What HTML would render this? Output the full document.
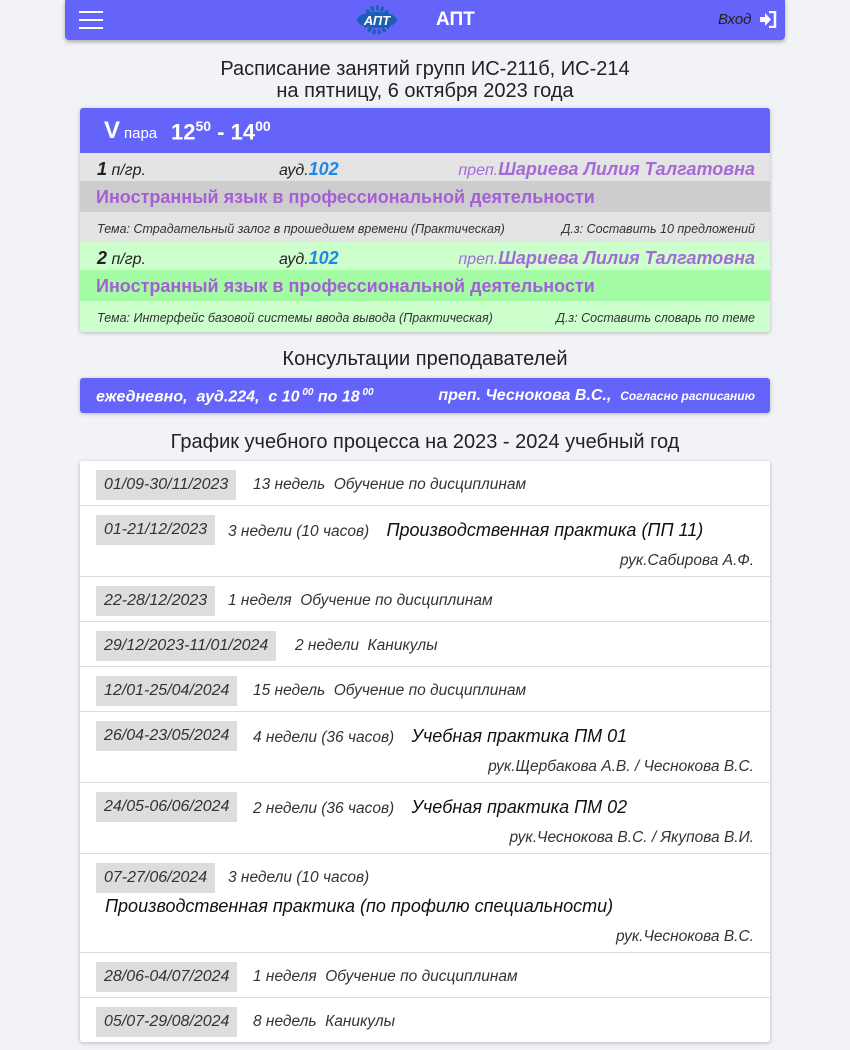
<!DOCTYPE html>
<html><head><meta charset="utf-8"><style>
*{box-sizing:border-box;margin:0;padding:0}
body{width:850px;height:1050px;overflow:hidden;background:#f2f3f6;font-family:"Liberation Sans",sans-serif;color:#222;position:relative}
.abs{position:absolute}
.nav{left:65px;top:0;width:720px;height:40px;background:#6464fa;border-radius:0 0 4px 4px;box-shadow:0 2px 4px rgba(0,0,0,.3)}
.burger span{position:absolute;left:14px;width:24px;height:2px;background:#fff}
.title{left:0;width:850px;text-align:center;font-size:20px;line-height:22px;color:#222}
.card{left:80px;width:690px;box-shadow:0 1px 4px rgba(0,0,0,.25);border-radius:3px;overflow:hidden}
.i{font-style:italic}
.row{position:absolute;left:0;width:690px;border-top:1px solid #ddd}
.d{position:absolute;left:16px;background:#ddd;height:30px;line-height:30px;padding:0 8px;font-style:italic;font-size:16px;color:#333}
.t{position:absolute;font-style:italic;font-size:15.5px;color:#333;line-height:30px;white-space:nowrap}
.b{font-size:18px;color:#111}
.r{position:absolute;right:16px;font-style:italic;font-size:15.5px;color:#333;white-space:nowrap}
</style></head><body>
<div class="abs nav">
 <div class="burger"><span style="top:11px"></span><span style="top:19px"></span><span style="top:27px"></span></div>
 <svg class="abs" style="left:290px;top:5px" width="44" height="30" viewBox="0 0 44 30"><circle cx="22" cy="15" r="12" fill="none" stroke="#1a5fb4" stroke-width="5" stroke-dasharray="3 2"/><ellipse cx="22" cy="15" rx="20" ry="8" fill="#1a5fb4"/><text x="22" y="20" text-anchor="middle" font-size="13" font-style="italic" font-weight="bold" fill="#fff" font-family="Liberation Sans">АПТ</text></svg>
 <div class="abs" style="left:371px;top:9px;color:#fff;font-weight:bold;font-size:19px">АПТ</div>
 <div class="abs i" style="left:653px;top:11px;font-size:15px;color:#222">Вход</div>
 <svg class="abs" style="left:694px;top:11px" width="18" height="17" viewBox="0 0 18 17"><path d="M10 1h6v15h-6" fill="none" stroke="#fff" stroke-width="2.5"/><path d="M1 6h5V2l6 6.5-6 6.5v-4H1z" fill="#fff"/></svg>
</div>
<div class="abs title" style="top:58px">Расписание занятий групп ИС-211б, ИС-214<br>на пятницу, 6 октября 2023 года</div>
<div class="abs card" style="top:108px;height:224px">
 <div class="abs" style="left:0;top:0;width:690px;height:45px;background:#6464fa;color:#fff">
  <span class="abs" style="left:24px;top:9px;font-size:24px;font-weight:bold">V</span>
  <span class="abs" style="left:44px;top:17px;font-size:15px">пара</span>
  <span class="abs" style="left:91px;top:10px;font-size:22px;font-weight:bold">12<sup style="font-size:14px">50</sup> - 14<sup style="font-size:14px">00</sup></span>
 </div>
 <div class="abs" style="top:45px;left:0;width:690px;height:28px;background:#e4e4e4"></div>
 <div class="abs" style="top:73px;left:0;width:690px;height:31px;background:#cdcdcd"></div>
 <div class="abs" style="top:104px;left:0;width:690px;height:30px;background:#e4e4e4"></div>
 <div class="abs" style="top:134px;left:0;width:690px;height:28px;background:#ccffcc"></div>
 <div class="abs" style="top:162px;left:0;width:690px;height:31px;background:#a3fba3"></div>
 <div class="abs" style="top:193px;left:0;width:690px;height:31px;background:#ccffcc"></div>
 <div class="abs i" style="left:17px;top:51px;font-size:16px"><b style="font-size:18px">1</b> п/гр.</div>
 <div class="abs i" style="left:199px;top:51px;font-size:16px">ауд.<b style="color:#1e88e5;font-size:18px">102</b></div>
 <div class="abs i" style="right:15px;top:51px;font-size:16px;color:#a66ad8">преп.<b style="font-size:18px">Шариева Лилия Талгатовна</b></div>
 <div class="abs" style="left:16px;top:79px;font-size:18px;font-weight:bold;color:#a55fd6">Иностранный язык в профессиональной деятельности</div>
 <div class="abs i" style="left:17px;top:114px;font-size:12.5px;color:#333">Тема: Страдательный залог в прошедшем времени (Практическая)</div>
 <div class="abs i" style="right:15px;top:114px;font-size:12.5px;color:#333">Д.з: Составить 10 предложений</div>
 <div class="abs i" style="left:17px;top:140px;font-size:16px"><b style="font-size:18px">2</b> п/гр.</div>
 <div class="abs i" style="left:199px;top:140px;font-size:16px">ауд.<b style="color:#1e88e5;font-size:18px">102</b></div>
 <div class="abs i" style="right:15px;top:140px;font-size:16px;color:#a66ad8">преп.<b style="font-size:18px">Шариева Лилия Талгатовна</b></div>
 <div class="abs" style="left:16px;top:168px;font-size:18px;font-weight:bold;color:#a55fd6">Иностранный язык в профессиональной деятельности</div>
 <div class="abs i" style="left:17px;top:203px;font-size:12.5px;color:#333">Тема: Интерфейс базовой системы ввода вывода (Практическая)</div>
 <div class="abs i" style="right:15px;top:203px;font-size:12.5px;color:#333">Д.з: Составить словарь по теме</div>
</div>
<div class="abs title" style="top:348px">Консультации преподавателей</div>
<div class="abs card" style="top:378px;height:35px;background:#6464fa;color:#fff">
 <div class="abs i" style="left:16px;top:9px;font-size:16px;font-weight:bold">ежедневно,&nbsp; ауд.224,&nbsp; с 10<sup style="font-size:10px"> 00</sup> по 18<sup style="font-size:10px"> 00</sup></div>
 <div class="abs i" style="right:15px;top:9px;font-size:16px;font-weight:bold">преп. Чеснокова В.С.,&nbsp; <span style="font-size:12px">Согласно расписанию</span></div>
</div>
<div class="abs title" style="top:431px">График учебного процесса на 2023 - 2024 учебный год</div>
<div class="abs card" style="top:461px;height:581px;background:#fff">
 <div class="row" style="top:0;border:0"><div class="d" style="top:9px">01/09-30/11/2023</div><div class="t" style="left:173px;top:9px">13 недель&nbsp; Обучение по дисциплинам</div></div>
 <div class="row" style="top:44px"><div class="d" style="top:9px">01-21/12/2023</div><div class="t" style="left:148px;top:9px">3 недели (10 часов) &nbsp; &nbsp;<span class="b">Производственная практика (ПП 11)</span></div><div class="r" style="top:46px">рук.Сабирова А.Ф.</div></div>
 <div class="row" style="top:115px"><div class="d" style="top:9px">22-28/12/2023</div><div class="t" style="left:148px;top:9px">1 неделя&nbsp; Обучение по дисциплинам</div></div>
 <div class="row" style="top:160px"><div class="d" style="top:9px">29/12/2023-11/01/2024</div><div class="t" style="left:215px;top:9px">2 недели&nbsp; Каникулы</div></div>
 <div class="row" style="top:205px"><div class="d" style="top:9px">12/01-25/04/2024</div><div class="t" style="left:173px;top:9px">15 недель&nbsp; Обучение по дисциплинам</div></div>
 <div class="row" style="top:250px"><div class="d" style="top:9px">26/04-23/05/2024</div><div class="t" style="left:173px;top:9px">4 недели (36 часов) &nbsp; &nbsp;<span class="b">Учебная практика ПМ 01</span></div><div class="r" style="top:46px">рук.Щербакова А.В. / Чеснокова В.С.</div></div>
 <div class="row" style="top:321px"><div class="d" style="top:9px">24/05-06/06/2024</div><div class="t" style="left:173px;top:9px">2 недели (36 часов) &nbsp; &nbsp;<span class="b">Учебная практика ПМ 02</span></div><div class="r" style="top:46px">рук.Чеснокова В.С. / Якупова В.И.</div></div>
 <div class="row" style="top:392px"><div class="d" style="top:9px">07-27/06/2024</div><div class="t" style="left:148px;top:9px">3 недели (10 часов)</div><div class="t b" style="left:25px;top:37px">Производственная практика (по профилю специальности)</div><div class="r" style="top:74px">рук.Чеснокова В.С.</div></div>
 <div class="row" style="top:491px"><div class="d" style="top:9px">28/06-04/07/2024</div><div class="t" style="left:173px;top:9px">1 неделя&nbsp; Обучение по дисциплинам</div></div>
 <div class="row" style="top:536px"><div class="d" style="top:9px">05/07-29/08/2024</div><div class="t" style="left:173px;top:9px">8 недель&nbsp; Каникулы</div></div>
</div>
</body></html>
